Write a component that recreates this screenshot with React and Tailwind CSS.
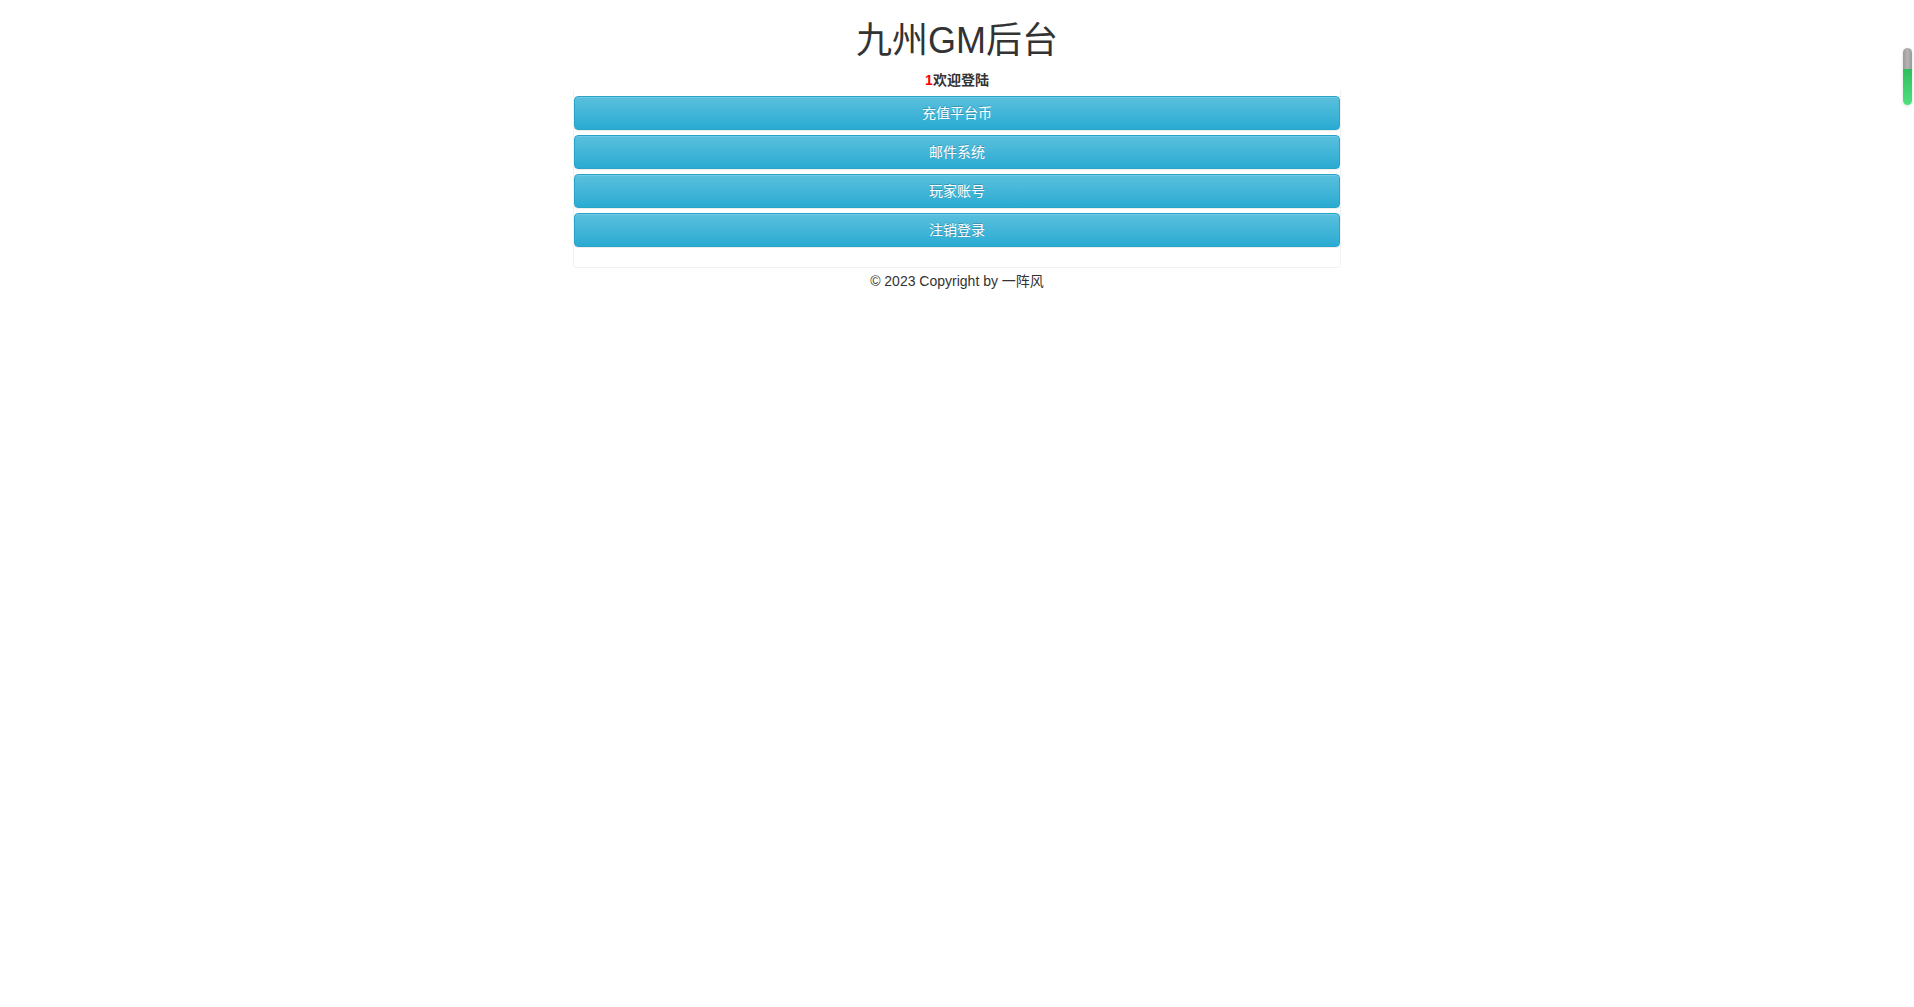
import React from 'react';

const menu = ['充值平台币', '邮件系统', '玩家账号', '注销登录'];

export default function App() {
  return (
    <div
      className="min-h-screen bg-white text-[#333] text-sm"
      style={{ fontFamily: '"Liberation Sans", "Noto Sans CJK SC", sans-serif' }}
    >
      <div className="w-[768px] mx-auto">
        <h1 className="mt-[21px] mb-[9px] text-center text-[36px] leading-[40px] font-normal">九州GM后台</h1>
        <p className="text-center font-bold leading-5">
          <span className="text-[#ff0000]">1</span>欢迎登陆
        </p>

        {/* menu panel */}
        <div className="flex flex-col gap-[5px] pt-[6px] pb-[20px] border border-t-0 border-[#f2f2f2] rounded-b">
          {menu.map((label) => (
            <button
              key={label}
              className="w-full h-[34px] px-3 rounded border border-[#28a4c9] bg-[linear-gradient(to_bottom,#5bc0de_0%,#2aabd2_100%)] text-white text-sm leading-5 [text-shadow:0_-1px_0_rgba(0,0,0,0.2)] shadow-[inset_0_1px_0_rgba(255,255,255,0.15),0_1px_1px_rgba(0,0,0,0.075)]"
            >
              {label}
            </button>
          ))}
        </div>

        <p className="mt-[3px] text-center leading-5">© 2023 Copyright by 一阵风</p>
      </div>

      {/* scroll indicator overlay */}
      <div className="fixed top-[48px] right-[2px] w-[9px] h-[57px] rounded-full overflow-hidden flex flex-col shadow-[0_1px_3px_rgba(0,0,0,0.15)]">
        <div className="h-[21px] bg-[linear-gradient(to_right,#9a9a9a,#b4b4b4,#9a9a9a)]" />
        <div className="flex-1 bg-[linear-gradient(to_bottom,#2fbf5c,#4fe07f)]" />
      </div>
    </div>
  );
}
